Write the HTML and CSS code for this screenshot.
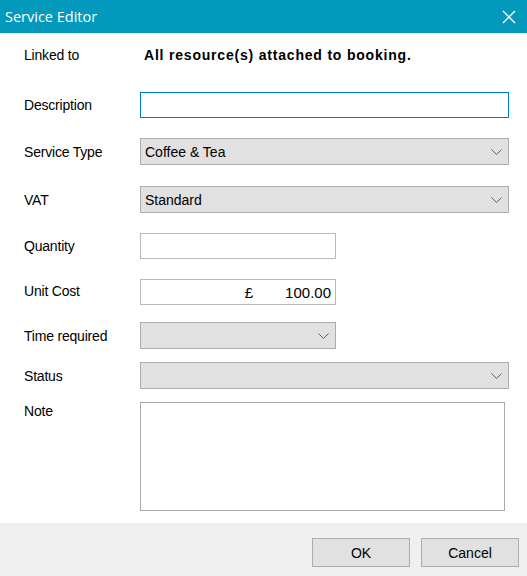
FILE: index.html
```html
<!DOCTYPE html>
<html lang="en">
<head>
    <meta charset="UTF-8">
    <meta name="viewport" content="width=device-width, initial-scale=1.0">
    <title>Service Editor</title>
    <link rel="stylesheet" href="styles.css">
</head>
<body>

    <div class="window">
        <!-- Title bar -->
        <div class="titlebar">
            <span class="title">Service Editor</span>
            <svg class="close" width="14" height="14" viewBox="0 0 14 14">
                <path d="M1 1 L13 13 M13 1 L1 13" stroke="#fff" stroke-width="1.3" fill="none"/>
            </svg>
        </div>

        <!-- Form fields -->
        <div class="form">
            <div class="row row-linked">
                <label>Linked to</label>
                <span class="linked-value">All resource(s) attached to booking.</span>
            </div>

            <div class="row row-desc">
                <label>Description</label>
                <div class="textbox focused"></div>
            </div>

            <div class="row row-type">
                <label>Service Type</label>
                <div class="combo">
                    <span>Coffee &amp; Tea</span>
                    <svg class="chevron" width="11" height="7" viewBox="0 0 11 7"><polyline points="0.5,0.5 5.5,5.5 10.5,0.5" fill="none" stroke="#5f5f5f" stroke-width="1"/></svg>
                </div>
            </div>

            <div class="row row-vat">
                <label>VAT</label>
                <div class="combo">
                    <span>Standard</span>
                    <svg class="chevron" width="11" height="7" viewBox="0 0 11 7"><polyline points="0.5,0.5 5.5,5.5 10.5,0.5" fill="none" stroke="#5f5f5f" stroke-width="1"/></svg>
                </div>
            </div>

            <div class="row row-qty">
                <label>Quantity</label>
                <div class="textbox short"></div>
            </div>

            <div class="row row-cost">
                <label>Unit Cost</label>
                <div class="textbox short money">
                    <span class="currency">£</span>
                    <span class="amount">100.00</span>
                </div>
            </div>

            <div class="row row-time">
                <label>Time required</label>
                <div class="combo short">
                    <span></span>
                    <svg class="chevron" width="11" height="7" viewBox="0 0 11 7"><polyline points="0.5,0.5 5.5,5.5 10.5,0.5" fill="none" stroke="#5f5f5f" stroke-width="1"/></svg>
                </div>
            </div>

            <div class="row row-status">
                <label>Status</label>
                <div class="combo">
                    <span></span>
                    <svg class="chevron" width="11" height="7" viewBox="0 0 11 7"><polyline points="0.5,0.5 5.5,5.5 10.5,0.5" fill="none" stroke="#5f5f5f" stroke-width="1"/></svg>
                </div>
            </div>

            <div class="row row-note">
                <label>Note</label>
                <div class="textbox note"></div>
            </div>
        </div>

        <!-- Buttons -->
        <div class="footer">
            <button class="btn">OK</button>
            <button class="btn">Cancel</button>
        </div>
    </div>

</body>
</html>
```

FILE: styles.css
```css
body {
    margin: 0;
    padding: 0;
    font-family: "Liberation Sans", Arial, sans-serif;
    font-size: 14px;
    color: #000;
    background: #fff;
}

.window {
    width: 527px;
    height: 576px;
    display: flex;
    flex-direction: column;
    overflow: hidden;
}

/* Title bar */
.titlebar {
    height: 33px;
    flex-shrink: 0;
    background: #0399bd;
    display: flex;
    align-items: center;
    justify-content: space-between;
    padding: 0 11px 0 5px;
}

.title {
    font-family: "Open Sans", "Noto Sans", sans-serif;
    font-size: 14.5px;
    color: #fff;
    margin-top: -1px;
}

.close {
    display: block;
}

/* Form */
.form {
    flex: 1;
    padding: 12px 18px 0 24px;
}

.row {
    display: grid;
    grid-template-columns: 116px 1fr;
    align-items: center;
}

.row label {
    white-space: nowrap;
    letter-spacing: -0.2px;
}

.row-linked  { height: 20px; }
.row-desc    { margin-top: 27px; }
.row-type    { margin-top: 20px; }
.row-vat     { margin-top: 21px; }
.row-qty     { margin-top: 20px; }
.row-cost    { margin-top: 20px; }
.row-time    { margin-top: 17px; }
.row-status  { margin-top: 13px; }
.row-note    { margin-top: 13px; align-items: start; }

.row-cost label {
    margin-top: -3px;
}

.row-note label {
    padding-top: 1px;
}

.linked-value {
    font-weight: bold;
    letter-spacing: 0.8px;
    padding-left: 4px;
}

.textbox {
    box-sizing: border-box;
    height: 26px;
    background: #fff;
    border: 1px solid #b9b9b9;
}

.textbox.focused {
    border-color: #0078d7;
}

.short {
    width: 196px;
}

.money {
    display: flex;
    align-items: center;
    justify-content: flex-end;
    padding-right: 4px;
    font-size: 15px;
}

.currency {
    margin-right: 32px;
}

.note {
    width: 365px;
    height: 109px;
    border-color: #a9a9a9;
}

.combo {
    box-sizing: border-box;
    height: 27px;
    background: #e1e1e1;
    border: 1px solid #adadad;
    display: flex;
    align-items: center;
    justify-content: space-between;
    padding: 0 6px 0 4px;
}

.chevron {
    display: block;
    margin-top: 1px;
}

/* Footer buttons */
.footer {
    height: 53px;
    flex-shrink: 0;
    background: #f0f0f0;
    display: flex;
    justify-content: flex-end;
    align-items: flex-start;
    gap: 11px;
    padding: 15px 8px 0 0;
    box-sizing: border-box;
}

.btn {
    width: 98px;
    height: 29px;
    background: #e1e1e1;
    border: 1px solid #adadad;
    font-family: "Liberation Sans", Arial, sans-serif;
    font-size: 14px;
    color: #000;
    padding: 0;
}
```
